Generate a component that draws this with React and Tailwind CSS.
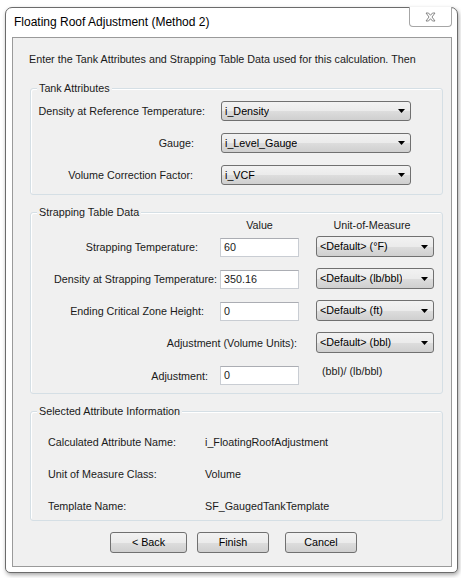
import React from "react";

function Combo({ value, className }) {
  return (
    <div
      className={`flex items-center justify-between border border-[#707070] rounded-[3px] bg-[linear-gradient(to_bottom,#f2f2f2_0%,#ebebeb_50%,#dddddd_51%,#cfcfcf_100%)] pl-[3px] pr-[5px] text-black ${className}`}
    >
      <span className="truncate">{value}</span>
      <svg width="7" height="4" viewBox="0 0 7 4" className="shrink-0">
        <polygon points="0,0 7,0 3.5,4" fill="#000" />
      </svg>
    </div>
  );
}

function TextBox({ value }) {
  return (
    <div className="w-[79px] h-[19px] mt-[2px] bg-white border border-[#c9cdd3] border-t-[#abadb3] pl-[3px] pt-[1px] leading-[14px]">
      {value}
    </div>
  );
}

function Group({ title, children, className }) {
  return (
    <div
      className={`border border-[#d5dfe5] rounded-[3px] shadow-[inset_1px_1px_0_#ffffff] ${className}`}
    >
      <div className="-mt-[7px] ml-[6px] px-[2px] w-fit bg-[#f0f0f0] leading-[13px]">
        {title}
      </div>
      {children}
    </div>
  );
}

function Button({ children, className }) {
  return (
    <button
      className={`h-[21px] border border-[#707070] rounded-[3px] bg-[linear-gradient(to_bottom,#f2f2f2_0%,#ebebeb_50%,#dddddd_51%,#cfcfcf_100%)] leading-[19px] text-black ${className}`}
    >
      {children}
    </button>
  );
}

export default function App() {
  return (
    <div className="w-[461px] h-[578px] bg-white pt-[7px] pl-[5px] font-['Liberation_Sans',Arial,sans-serif] text-[10.75px] text-[#1a1a1a]">
      <div className="w-[453px] h-[566px] flex flex-col bg-white border border-[#6b6b6b] rounded-t-[7px] rounded-b-[5px] shadow-[1px_2px_4px_rgba(0,0,0,0.35)]">
        {/* title bar */}
        <div className="h-[29px] flex items-start justify-between">
          <span className="pl-[8px] pt-[7px] text-[12px] leading-[15px] text-black">
            Floating Roof Adjustment (Method 2)
          </span>
          <div className="mr-[5px] -mt-px w-[43px] h-[20px] flex items-center justify-center border border-t-0 border-[#a6a6a6] rounded-b-[4px] bg-white">
            <svg width="11" height="10" viewBox="0 0 11 10">
              <path
                d="M1 1 L3.5 1 L5.5 3.3 L7.5 1 L10 1 L7 5 L10 9 L7.5 9 L5.5 6.7 L3.5 9 L1 9 L4 5 Z"
                fill="#ffffff"
                stroke="#7a7a7a"
                strokeWidth="0.9"
                strokeLinejoin="round"
              />
            </svg>
          </div>
        </div>

        {/* client area */}
        <div className="flex-1 ml-[6px] mr-[5px] mb-[5px] flex flex-col border border-[#9a9a9a] bg-[#f0f0f0] pl-[17px] pr-[8px]">
          <p className="mt-[14px] leading-[14px] -ml-px whitespace-nowrap">
            Enter the Tank Attributes and Strapping Table Data used for this calculation. Then
          </p>

          {/* Tank Attributes */}
          <Group title="Tank Attributes" className="mt-[22px] pb-[9px]">
            <div className="mt-[6px] flex flex-col gap-[12px]">
              <div className="flex items-center">
                <div className="w-[190px] pr-[16px] text-right whitespace-nowrap">
                  Density at Reference Temperature:
                </div>
                <Combo value="i_Density" className="w-[190px] h-[20px]" />
              </div>
              <div className="flex items-center">
                <div className="w-[190px] pr-[27px] text-right">Gauge:</div>
                <Combo value="i_Level_Gauge" className="w-[190px] h-[20px]" />
              </div>
              <div className="flex items-center">
                <div className="w-[190px] pr-[28px] text-right">
                  Volume Correction Factor:
                </div>
                <Combo value="i_VCF" className="w-[190px] h-[20px]" />
              </div>
            </div>
          </Group>

          {/* Strapping Table Data */}
          <Group title="Strapping Table Data" className="mt-[17px] pb-[8px]">
            <div className="flex leading-[13px]">
              <div className="w-[189px]" />
              <div className="w-[79px] text-center">Value</div>
              <div className="w-[17px]" />
              <div className="w-[112px] text-center">Unit-of-Measure</div>
            </div>
            <div className="mt-[4px] flex flex-col gap-[11px]">
              <div className="flex items-start h-[21px]">
                <div className="w-[189px] pr-[22px] pt-[5px] text-right leading-[13px]">
                  Strapping Temperature:
                </div>
                <TextBox value="60" />
                <Combo value="<Default> (°F)" className="ml-[17px] w-[118px] h-[21px]" />
              </div>
              <div className="flex items-start h-[21px]">
                <div className="w-[189px] pr-[3px] pt-[5px] text-right leading-[13px] whitespace-nowrap">
                  Density at Strapping Temperature:
                </div>
                <TextBox value="350.16" />
                <Combo value="<Default> (lb/bbl)" className="ml-[17px] w-[118px] h-[21px]" />
              </div>
              <div className="flex items-start h-[21px]">
                <div className="w-[189px] pr-[16px] pt-[5px] text-right leading-[13px]">
                  Ending Critical Zone Height:
                </div>
                <TextBox value="0" />
                <Combo value="<Default> (ft)" className="ml-[17px] w-[118px] h-[21px]" />
              </div>
              <div className="flex items-start h-[21px]">
                <div className="w-[285px] pr-[19px] pt-[5px] text-right leading-[13px]">
                  Adjustment (Volume Units):
                </div>
                <Combo value="<Default> (bbl)" className="w-[118px] h-[21px]" />
              </div>
              <div className="flex items-start h-[21px]">
                <div className="w-[189px] pr-[12px] pt-[6px] text-right leading-[13px]">
                  Adjustment:
                </div>
                <TextBox value="0" />
                <div className="ml-[23px] pt-[1px] leading-[13px]">(bbl)/ (lb/bbl)</div>
              </div>
            </div>
          </Group>

          {/* Selected Attribute Information */}
          <Group title="Selected Attribute Information" className="mt-[17px] pb-[7px]">
            <div className="mt-[18px] pl-[17px] flex flex-col gap-[19px] leading-[13px]">
              <div className="flex">
                <div className="w-[157px]">Calculated Attribute Name:</div>
                <div>i_FloatingRoofAdjustment</div>
              </div>
              <div className="flex">
                <div className="w-[157px]">Unit of Measure Class:</div>
                <div>Volume</div>
              </div>
              <div className="flex">
                <div className="w-[157px]">Template Name:</div>
                <div>SF_GaugedTankTemplate</div>
              </div>
            </div>
          </Group>

          {/* buttons */}
          <div className="mt-[11px] pl-[80px] flex">
            <Button className="w-[77px]">&lt; Back</Button>
            <Button className="ml-[10px] w-[72px]">Finish</Button>
            <Button className="ml-[16px] w-[72px]">Cancel</Button>
          </div>
        </div>
      </div>
    </div>
  );
}
